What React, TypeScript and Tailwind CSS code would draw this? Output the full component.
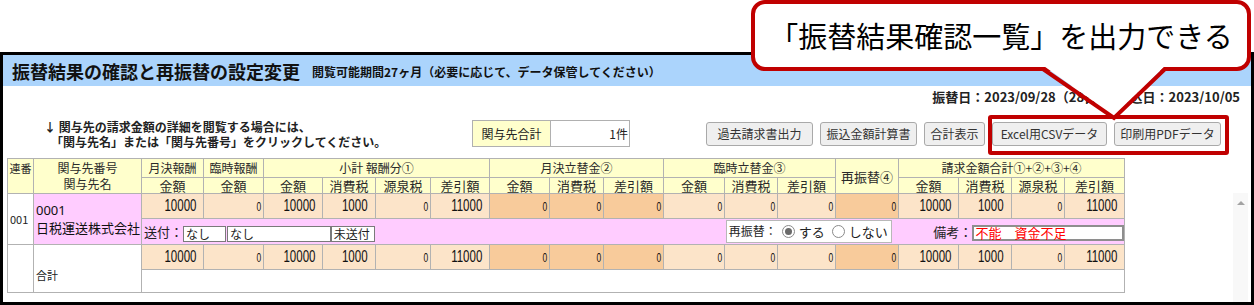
import React from "react";

const cols = [26, 108, 62, 60, 59, 53, 55, 59, 60, 54, 60, 61, 53, 58, 63, 60, 53, 53, 60];

type V = [string, "l" | "d"];
const vals: V[] = [
  ["10000", "l"], ["0", "l"], ["10000", "l"], ["1000", "l"], ["0", "l"], ["11000", "l"],
  ["0", "d"], ["0", "d"], ["0", "d"],
  ["0", "l"], ["0", "l"], ["0", "l"],
  ["0", "d"],
  ["10000", "l"], ["1000", "l"], ["0", "l"], ["11000", "l"],
];

const bd = "border border-[#b2b2b2]";
const hd = `${bd} bg-[#ffffcc] p-0 font-normal text-[#2a2a2a] text-center`;

function NumCell({ v }: { v: V }) {
  const bg = v[1] === "d" ? "bg-[#f8cb9b]" : "bg-[#fce4c9]";
  const zero = v[0] === "0";
  return (
    <td className={`${bd} ${bg} p-0 text-right text-[#111] font-['Liberation_Sans',sans-serif] ${zero ? "pr-[2px]" : "pr-[7px]"}`}>
      <span
        className={`inline-block origin-right leading-none ${zero ? "text-[13px] scale-x-[0.65]" : "text-[16px] scale-x-[0.72]"}`}
      >
        {v[0]}
      </span>
    </td>
  );
}

function Radio({ checked }: { checked?: boolean }) {
  return (
    <span className="inline-flex w-[13px] h-[13px] rounded-full border border-[#8a8a8a] bg-white items-center justify-center">
      {checked && <span className="w-[7px] h-[7px] rounded-full bg-[#6a6a6a]" />}
    </span>
  );
}

function Btn({ w, children }: { w: string; children: React.ReactNode }) {
  return (
    <div className={`${w} h-[24px] mt-[4px] flex items-center justify-center rounded-[3px] border border-[#a9a9a9] bg-[#efefef] text-[12px] text-[#333] leading-none whitespace-nowrap`}>
      {children}
    </div>
  );
}

export default function App() {
  return (
    <div className="relative w-[1254px] h-[305px] bg-white overflow-hidden font-['Noto_Sans_CJK_JP','Noto_Sans',sans-serif] text-[#222]">
      <div className="mt-[52px] h-[253px] border-[3px] border-black flex flex-col">
        {/* header band */}
        <div className="h-[31px] bg-[#abd4fc] flex items-center pl-[9px] shrink-0">
          <span className="text-[18px] font-bold leading-none text-[#111]">振替結果の確認と再振替の設定変更</span>
          <span className="ml-[12px] mt-[3px] text-[12px] font-bold leading-none text-[#111]">閲覧可能期間27ヶ月（必要に応じて、データ保管してください）</span>
        </div>
        {/* date line */}
        <div className="h-[22px] leading-[22px] text-right pr-[11px] text-[13px] font-bold text-[#222] shrink-0 whitespace-nowrap">
          振替日：2023/09/28（28日）　振込日：2023/10/05
        </div>
        {/* info row */}
        <div className="mt-[10px] h-[30px] flex items-start shrink-0">
          <div className="ml-[41px] w-[428px] pt-[1px] text-[12px] font-bold leading-[15px] text-[#222] whitespace-nowrap">
            <div>↓ 関与先の請求金額の詳細を閲覧する場合には、</div>
            <div className="pl-[7px]">「関与先名」または「関与先番号」をクリックしてください。</div>
          </div>
          <div className="mt-[2px] h-[27px] w-[158px] flex border border-[#b0b0b0] text-[12px] text-[#222]">
            <div className="w-[78px] bg-[#ffffcc] border-r border-[#b0b0b0] flex items-center justify-center">関与先合計</div>
            <div className="flex-1 bg-white flex items-center justify-end pr-[1px]">1件</div>
          </div>
          <div className="ml-[76px] flex gap-[7px]">
            <Btn w="w-[107px]">過去請求書出力</Btn>
            <Btn w="w-[97px]">振込金額計算書</Btn>
            <Btn w="w-[61px]">合計表示</Btn>
            <Btn w="w-[115px]">Excel用CSVデータ</Btn>
            <Btn w="w-[107px]">印刷用PDFデータ</Btn>
          </div>
        </div>
        {/* table */}
        <div className="mt-[10px] ml-[4px]">
          <table className="table-fixed border-collapse w-[1117px]">
            <colgroup>
              {cols.map((w, i) => (
                <col key={i} style={{ width: w }} />
              ))}
            </colgroup>
            <thead>
              <tr className="h-[19px]">
                <th rowSpan={2} className={`${hd} align-top text-[11px] leading-[18px]`}>連番</th>
                <th rowSpan={2} className={`${hd} align-top text-[12px] leading-[16px] pt-[1px]`}>
                  関与先番号
                  <br />
                  関与先名
                </th>
                <th className={`${hd} text-[12px] leading-none`}>月決報酬</th>
                <th className={`${hd} text-[12px] leading-none`}>臨時報酬</th>
                <th colSpan={4} className={`${hd} text-[12px] leading-none`}>小計 報酬分①</th>
                <th colSpan={3} className={`${hd} text-[12px] leading-none`}>月決立替金②</th>
                <th colSpan={3} className={`${hd} text-[12px] leading-none`}>臨時立替金③</th>
                <th rowSpan={2} className={`${hd} text-[13px] leading-none`}>再振替④</th>
                <th colSpan={4} className={`${hd} text-[12px] leading-none`}>請求金額合計①+②+③+④</th>
              </tr>
              <tr className="h-[16px]">
                {["金額", "金額", "金額", "消費税", "源泉税", "差引額", "金額", "消費税", "差引額", "金額", "消費税", "差引額"].map((t, i) => (
                  <th key={i} className={`${hd} text-[13px] leading-none`}>{t}</th>
                ))}
                {["金額", "消費税", "源泉税", "差引額"].map((t, i) => (
                  <th key={"b" + i} className={`${hd} text-[13px] leading-none`}>{t}</th>
                ))}
              </tr>
            </thead>
            <tbody>
              <tr className="h-[22px]">
                <td rowSpan={2} className={`${bd} bg-white p-0 pl-[2px] text-[11px] text-[#222] align-middle`}>001</td>
                <td rowSpan={2} className={`${bd} bg-[#ffccff] p-0 pl-[2px] text-[13px] leading-[18px] text-[#111] align-middle`}>
                  <div className="font-['Noto_Sans',sans-serif]">0001</div>
                  <div className="whitespace-nowrap">日税運送株式会社</div>
                </td>
                {vals.map((v, i) => (
                  <NumCell key={i} v={v} />
                ))}
              </tr>
              <tr className="h-[26px]">
                <td colSpan={17} className={`${bd} bg-[#ffccff] p-0`}>
                  <div className="flex items-center h-[24px] text-[13px] text-[#222] whitespace-nowrap">
                    <span className="ml-[2px] w-[39px] leading-none">送付：</span>
                    <span className="w-[43px] h-[16px] mt-[4px] bg-white border border-[#7a7a7a] text-[12px] leading-[14px] pl-[2px]">なし</span>
                    <span className="ml-[1px] w-[104px] h-[16px] mt-[4px] bg-white border border-[#7a7a7a] text-[12px] leading-[14px] pl-[2px]">なし</span>
                    <span className="w-[44px] h-[16px] mt-[4px] bg-white border border-[#7a7a7a] text-[12px] leading-[14px] pl-[2px]">未送付</span>
                    <div className="ml-[351px] w-[167px] h-[23px] -mt-[1px] bg-white border border-[#b8b8b8] flex items-center text-[12px] leading-none">
                      <span className="ml-[2px]">再振替：</span>
                      <span className="ml-[5px] flex items-center"><Radio checked /></span>
                      <span className="ml-[4px] text-[13px]">する</span>
                      <span className="ml-[7px] flex items-center"><Radio /></span>
                      <span className="ml-[4px] text-[13px]">しない</span>
                    </div>
                    <span className="ml-[41px] leading-none">備考：</span>
                    <span className="w-[152px] h-[16px] mt-[2px] bg-white border-2 border-[#8e8e8e] text-[13px] leading-[12px] text-[#ff0000] pl-[1px]">不能　資金不足</span>
                  </div>
                </td>
              </tr>
              <tr className="h-[22px]">
                <td rowSpan={2} className={`${bd} bg-white p-0`}></td>
                <td rowSpan={2} className={`${bd} bg-white p-0 pl-[2px] pb-[9px] text-[11px] text-[#222] align-bottom`}>合計</td>
                {vals.map((v, i) => (
                  <NumCell key={i} v={v} />
                ))}
              </tr>
              <tr className="h-[23px]">
                <td colSpan={17} className={`${bd} bg-white p-0`}></td>
              </tr>
            </tbody>
          </table>
        </div>
      </div>

      {/* scrollbar remnant */}
      <div className="absolute left-[1233px] top-[193px] w-[15px] h-[109px] bg-[#f8f8f8]">
        <div className="mx-auto mt-[8px] w-0 h-0 border-l-[4px] border-r-[4px] border-b-[4px] border-l-transparent border-r-transparent border-b-[#a3a3a3]" />
      </div>

      {/* highlight rectangle */}
      <div className="absolute left-[988px] top-[115px] w-[241px] h-[40px] border-[4px] border-[#c00000] rounded-[3px]" />

      {/* callout */}
      <div className="absolute left-[751px] top-0 w-[500px] h-[71px] border-[4px] border-[#c00000] rounded-[14px] bg-white flex items-center justify-center">
        <span className="text-[29px] leading-none text-black font-normal">「振替結果確認一覧」を出力できる</span>
      </div>
      <svg className="absolute left-0 top-0" width="1254" height="305" viewBox="0 0 1254 305">
        <path d="M1041 64 L1114 116 L1167 64 Z" fill="#ffffff" />
        <path d="M1043 69 L1114 118 L1165 69" fill="none" stroke="#c00000" strokeWidth="4" strokeLinejoin="miter" />
      </svg>
    </div>
  );
}
